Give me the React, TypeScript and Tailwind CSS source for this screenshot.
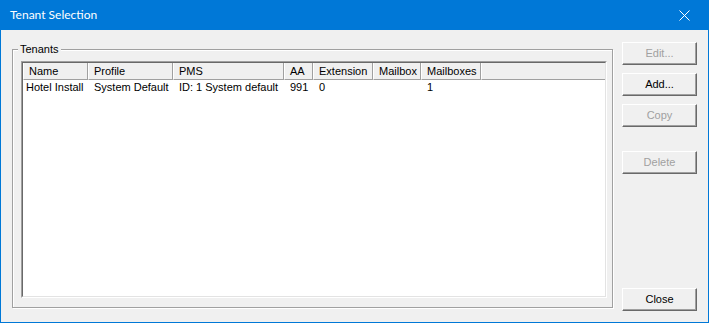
const columns = [
  { label: "Name", w: "w-[65px]" },
  { label: "Profile", w: "w-[85px]" },
  { label: "PMS", w: "w-[111px]" },
  { label: "AA", w: "w-[29px]" },
  { label: "Extension", w: "w-[60px]" },
  { label: "Mailbox", w: "w-[48px]" },
  { label: "Mailboxes", w: "w-[60px]" },
];

const rows = [["Hotel Install", "System Default", "ID: 1 System default", "991", "0", "", "1"]];

function Button({ label, disabled, className = "" }: { label: string; disabled?: boolean; className?: string }) {
  return (
    <button
      className={`h-[23px] w-[75px] border border-t-white border-l-white border-r-[#696969] border-b-[#696969] bg-[#f0f0f0] shadow-[inset_-1px_-1px_0_#a0a0a0] text-[11px] leading-none ${
        disabled ? "text-[#a0a0a0]" : "text-black"
      } ${className}`}
    >
      {label}
    </button>
  );
}

export default function App() {
  return (
    <div className="w-[709px] h-[323px] flex flex-col bg-[#0078d7] px-[1px] pb-[1px] font-['Liberation_Sans',Arial,sans-serif] text-[11px] text-black">
      {/* Title bar */}
      <div className="h-[30px] flex items-center justify-between text-white">
        <span className="pl-[9px] font-['Lato',sans-serif] text-[12px]">Tenant Selection</span>
        <div className="w-[46px] h-[30px] flex items-center justify-center pr-[1px]">
          <svg width="11" height="11" viewBox="0 0 11 11">
            <path d="M0.5 0.5 L10.5 10.5 M10.5 0.5 L0.5 10.5" stroke="#fff" strokeWidth="1" fill="none" />
          </svg>
        </div>
      </div>

      {/* Body */}
      <div className="flex-1 bg-[#f0f0f0] flex pl-[11px] pb-[11px]">
        <div className="relative mt-[19px] w-[601px] h-[259px] border border-[#a0a0a0] shadow-[inset_1px_1px_0_#fff,1px_1px_0_#fff] pl-[8px] pt-[11px]">
          <span className="absolute -top-[7px] left-[5px] bg-[#f0f0f0] px-[2px] leading-[13px]">Tenants</span>

          {/* List view */}
          <div className="w-[586px] h-[237px] border border-t-[#a0a0a0] border-l-[#a0a0a0] border-r-white border-b-white">
            <div className="w-full h-full bg-white border border-t-[#696969] border-l-[#696969] border-r-[#e3e3e3] border-b-[#e3e3e3] flex flex-col">
              <div className="flex h-[17px] bg-[#f0f0f0]">
                {columns.map((c) => (
                  <div
                    key={c.label}
                    className={`${c.w} shrink-0 h-full border-l border-l-white border-r border-r-[#a0a0a0] border-b border-b-[#a0a0a0] pl-[5px] leading-[16px] whitespace-nowrap`}
                  >
                    {c.label}
                  </div>
                ))}
                <div className="flex-1 h-full border-l border-l-white border-b border-b-[#a0a0a0]" />
              </div>
              {rows.map((r, i) => (
                <div key={i} className="flex h-[15px] leading-[15px]">
                  {r.map((v, j) => (
                    <div
                      key={j}
                      className={`${columns[j].w} shrink-0 whitespace-nowrap ${j === 0 ? "pl-[3px]" : "pl-[6px]"}`}
                    >
                      {v}
                    </div>
                  ))}
                </div>
              ))}
            </div>
          </div>
        </div>

        {/* Buttons */}
        <div className="ml-[9px] pt-[12px] flex flex-col">
          <Button label="Edit..." disabled />
          <Button label="Add..." className="mt-[8px]" />
          <Button label="Copy" disabled className="mt-[8px]" />
          <Button label="Delete" disabled className="mt-[24px]" />
          <Button label="Close" className="mt-auto" />
        </div>
      </div>
    </div>
  );
}
